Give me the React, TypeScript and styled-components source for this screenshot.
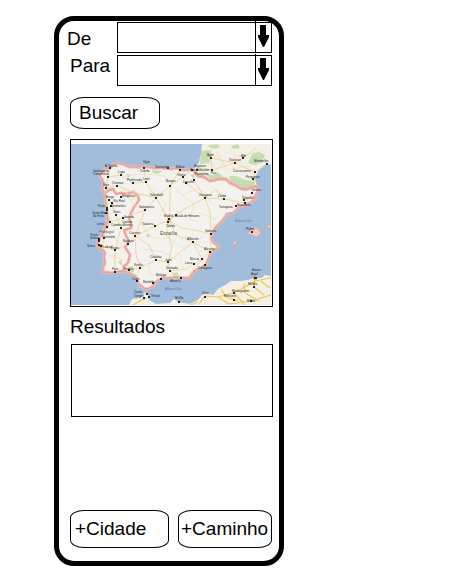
import React from "react";
import styled, { createGlobalStyle } from "styled-components";

const GlobalStyle = createGlobalStyle`
  *, *::before, *::after { box-sizing: border-box; }
  body {
    margin: 0;
    background: #fff;
    color: #000;
    font: 19px/22px "Liberation Sans", Arial, sans-serif;
  }
`;

const Page = styled.div`
  display: flex;
  min-height: 100vh;
  padding: 16px 16px 5px 54px;
`;

const Frame = styled.main`
  display: flex;
  flex-direction: column;
  width: 100%;
  max-width: 230px;
  padding: 1px 6px 13px 8px;
  border: 5px solid #000;
  border-radius: 20px;
`;

const Form = styled.form`
  display: flex;
  flex-direction: column;
  gap: 2px;
`;

const Field = styled.div`
  display: flex;
  height: 31px;
  padding-right: 1px;
`;

const FieldLabel = styled.label<{ $lowered?: boolean }>`
  flex: 0 0 50px;
  align-self: ${(p) => (p.$lowered ? "flex-end" : "flex-start")};
  padding: ${(p) => (p.$lowered ? "0 0 3px" : "0 0 0 3px")};
`;

const SelectBox = styled.div`
  position: relative;
  flex: 1;
`;

const Select = styled.select`
  display: block;
  width: 100%;
  height: 100%;
  padding: 0 20px 0 4px;
  border: 1px solid #000;
  border-radius: 0;
  background: #fff;
  color: inherit;
  font: inherit;
  appearance: none;
`;

const ArrowCell = styled.span`
  position: absolute;
  top: -1px;
  right: 0;
  bottom: 0;
  width: 17px;
  padding: 4px 0 0 2px;
  border-left: 1px solid #000;
  pointer-events: none;

  svg { display: block; }
`;

const Button = styled.button<{ $inset: number }>`
  height: 38px;
  padding: 0 0 0 ${(p) => p.$inset}px;
  border: 1px solid #000;
  border-radius: 14px / 8px;
  background: #fff;
  color: inherit;
  font: inherit;
  text-align: left;
  white-space: nowrap;
`;

const SearchButton = styled(Button)`
  align-self: flex-start;
  width: 90px;
  height: 32px;
  margin: 9px 0 0 3px;
`;

const MapPanel = styled.figure`
  margin: 10px 0 0 3px;
  padding: 4px 1px 1px 0;
  border: 1px solid #000;

  svg {
    display: block;
    width: 100%;
    height: auto;
  }
`;

const Heading = styled.h2`
  margin: 9px 0 6px 3px;
  font: inherit;
`;

const Results = styled.section`
  height: 73px;
  margin-left: 4px;
  border: 1px solid #000;
`;

const Actions = styled.div`
  display: grid;
  grid-template-columns: 99fr 94fr;
  gap: 9px;
  margin-top: auto;
  padding: 16px 1px 0 3px;
`;

const DownArrow = () => (
  <svg width="11" height="22" viewBox="0 0 11 22" aria-hidden="true">
    <path d="M2 0H8V10H11V12L6 22H5L0 12V10H2Z" fill="#000" />
  </svg>
);

type City = [name: string, x: number, y: number, lx?: number, ly?: number];

const cities: City[] = [
  ["A Coruña", 39, 24, 34, 23],
  ["Santiago de", 37, 33, 22, 28],
  ["Compostela", 37, 33, 22, 31],
  ["Lugo", 50, 31, 47, 29],
  ["Gijón", 73, 24, 72, 19],
  ["Oviedo", 73, 24, 69, 28],
  ["Santander", 97, 24, 84, 24],
  ["Ponferrada", 62, 39],
  ["León", 75, 38, 72, 36],
  ["Vigo", 35, 44, 32, 42],
  ["Ourense", 46, 42, 41, 40],
  ["Burgos", 99, 42, 95, 38],
  ["Braga", 38, 56, 35, 54],
  ["Bragança", 50, 53, 51, 53],
  ["Porto", 36, 64, 27, 63],
  ["Vila Real", 41, 59, 42, 58],
  ["Guimarães", 40, 62, 40, 63],
  ["Valladolid", 85, 54],
  ["Salamanca", 74, 66],
  ["Santa Maria", 36, 66, 21, 70],
  ["da Feira", 35, 69, 22, 73],
  ["Viseu", 45, 71, 42, 69],
  ["Guarda", 52, 74, 53, 74],
  ["Coimbra", 39, 78, 40, 82],
  ["Leiria", 36, 83, 26, 81],
  ["Castelo", 50, 84, 51, 79],
  ["Branco", 50, 84, 52, 82],
  ["Cáceres", 64, 92],
  ["Badajoz", 57, 100, 52, 98],
  ["Torres", 28, 95, 19, 92],
  ["Vedras", 28, 97, 19, 95],
  ["Santarém", 33, 94, 31, 94],
  ["Lisboa", 30, 102, 32, 104],
  ["Sintra", 28, 101, 16, 103],
  ["Évora", 44, 106, 40, 105],
  ["Madrid", 98, 75, 93, 73],
  ["Alcalá de Henares", 105, 71, 104, 73],
  ["Toledo", 97, 78, 95, 83],
  ["Talavera", 84, 82, 71, 81],
  ["Córdoba", 85, 116],
  ["Sevilla", 69, 124],
  ["Huelva", 58, 126, 53, 126],
  ["Faro", 44, 128, 41, 126],
  ["Jaén", 97, 118, 94, 117],
  ["Granada", 99, 127, 95, 125],
  ["Málaga", 90, 135, 85, 132],
  ["Marbella", 82, 139, 72, 139],
  ["Cádiz", 66, 137, 61, 136],
  ["Almería", 110, 134, 99, 138],
  ["Bilbao", 109, 26, 105, 24],
  ["San Sebastián", 121, 26, 119, 27],
  ["Vitoria", 112, 33, 106, 32],
  ["Pamplona", 123, 36, 124, 31],
  ["Logroño", 115, 39, 112, 39],
  ["Zaragoza", 134, 54],
  ["Lleida", 153, 55],
  ["Tarragona", 165, 62, 148, 64],
  ["Barcelona", 174, 59, 166, 62],
  ["Sabadell", 173, 56, 171, 55],
  ["Girona", 181, 49, 181, 47],
  ["Valencia", 140, 90, 134, 88],
  ["Albacete", 122, 98, 116, 96],
  ["Alicante", 139, 108, 133, 106],
  ["Murcia", 131, 115, 119, 116],
  ["Lorca", 123, 120, 114, 120],
  ["Cartagena", 134, 121, 127, 125],
  ["Palma", 181, 88, 175, 86],
  ["Bayonne", 126, 26, 123, 23],
  ["Pau", 141, 26, 140, 30],
  ["Toulouse", 164, 19, 158, 17],
  ["Montpellier", 196, 20, 183, 18],
  ["Carcassonne", 184, 28, 162, 28],
  ["Perpignan", 182, 35, 175, 34],
  ["Agen", 140, 14, 136, 12],
  ["Albi", 172, 14, 170, 13],
  ["Ceuta", 76, 150, 63, 149],
  ["Tánger", 73, 154, 63, 153],
  ["Tetuán", 78, 153, 80, 153],
  ["Melilla", 108, 158, 104, 155],
  ["Oran", 134, 153, 131, 150],
  ["Argel", 184, 134, 180, 131],
  ["Bouira", 185, 134, 181, 127],
  ["Mostaganem", 163, 149, 161, 148],
  ["Médéa", 183, 143, 177, 141],
  ["Relizane", 163, 156, 153, 153],
  ["M'Sila", 180, 157, 176, 158],
];

const spain =
  "M39 24 42 21 45 19 52 20 58 23 66 23 73 22 82 24 90 24 100 25 106 24 112 26 122 26 127 32 133 33 139 37 148 35 155 35 159 39 164 41 171 45 177 45 180 43 186 42 187 47 185 50 184 55 179 59 174 61 168 63 162 69 156 70 152 76 145 83 141 89 140 94 142 98 148 103 144 106 140 108 138 113 135 121 127 125 122 128 119 134 113 134 106 133 99 134 91 134 86 137 81 143 77 145 74 145 69 141 67 138 64 132 60 130 56 128 52 127 45 128 40 129 36 128 32 129 32 124 34 119 33 113 34 109 32 106 29 106 30 103 26 102 27 98 29 93 33 88 34 83 37 77 36 69 35 59 34 52 31 44 33 41 31 35 28 31 32 27 35 24Z";

const border =
  "M34 49 38 46 42 45 45 50 50 49 56 50 62 48 67 52 68 56 63 63 60 69 58 74 60 80 60 84 53 86 55 92 58 97 54 103 59 111 57 119 53 122 52 127";

const pyrenees =
  "M122 26 127 32 133 33 139 37 148 35 155 35 159 39 164 41 171 45 177 45 186 42";

const roads =
  "M98 76 85 54 75 38 73 24M85 54 99 42 112 33 121 26M98 76 99 58 99 42 109 26M98 76 115 64 134 54 153 55 174 59 181 49 183 36 184 28 196 20M98 76 110 84 124 86 140 90 139 108 131 115 117 133M98 76 96 86 101 103 97 118 85 116 69 124 64 136M97 118 99 127 90 135M98 76 84 82 64 92 57 100 44 106 30 102M36 64 39 78 33 94 30 102M36 64 35 44 37 33 39 24M37 33 50 31 62 39 75 38M74 66 85 54M74 66 64 92 65 110 69 124M74 66 52 74 39 78M112 33 115 39 134 54 139 68 140 90M122 98 105 91 98 76M122 98 139 108M122 98 131 115M97 118 122 98M35 44 46 42 64 49 85 54M123 36 134 54 145 45 153 55M39 56 45 71 50 84 44 106 44 128M99 127 110 134M64 92 78 101 85 116M141 26 164 19 184 28M126 24 141 26M140 0 140 14 141 26M140 14 164 19 172 14 185 4M52 126 69 124M99 127 115 125 131 115";

const minorRoads =
  "M45 35 52 43 60 58 74 66M56 31 74 30 94 32 99 42M82 43 95 60 89 73M70 79 81 94 98 94 113 105M105 46 123 60 119 75 127 79M73 105 92 108 107 116M111 51 128 44 141 60M144 46 163 58 161 66M128 69 146 76M37 111 53 116M39 91 51 101M55 60 71 50M79 118 78 128 90 135M109 110 112 124M145 7 156 26 179 22M158 4 166 13 193 6M170 51 182 56M113 93 132 94M126 14 145 22";

const france =
  "M131 0 130 9 128 19 122 26 127 32 139 37 155 35 164 41 177 45 186 42 184 35 187 27 195 20 200 21V0Z";

const africa =
  "M58 161 61 155 69 154 72 152 74 148 77 151 78 156 85 160 99 159 103 155 107 158 119 160 127 156 131 151 135 149 142 151 147 145 154 141 160 137 169 137 177 136 183 134 191 134 194 131 200 132V161Z";

const IberiaMap = () => (
  <svg viewBox="0 0 200 161" role="img" aria-label="Mapa da Península Ibérica">
    <rect width="200" height="161" fill="#a2bddc" />
    <path d={france} fill="#f2f0e8" />
    <path d={africa} fill="#f4f1e4" />
    <path d={spain} fill="#f3f2ee" />
    <g fill="#c5ddb0">
      <path d="M130 7 138 6 141 10 138 19 129 20Z" />
      <path d="M133 28 140 31 148 29 153 34 148 36 140 36Z" />
      <path d="M158 32 165 32 174 36 184 37 183 44 175 45 167 41 160 38Z" />
      <path d="M181 10 188 8 194 11 191 18 184 21 177 19Z" />
      <path d="M136 2 145 0 150 3 144 5ZM160 2 167 0 169 4 162 5Z" />
      <path d="M65 22 70 21 72 24 67 25ZM81 26 91 27 87 30 82 29Z" />
      <path d="M55 31 59 30 58 34ZM47 118 51 116 51 122ZM57 123 62 122 63 128 59 129Z" />
      <path d="M101 130 106 128 108 130 103 132ZM119 31 124 30 123 35ZM75 90 79 91 77 94Z" />
    </g>
    <g fill="none" strokeLinejoin="round">
      <g stroke="#f4b6b0" strokeWidth="3">
        <path d={spain} />
        <path d={border} />
        <path d={pyrenees} />
      </g>
      <g stroke="#b98f8c" strokeWidth="0.5">
        <path d={spain} />
        <path d={border} />
      </g>
      <path d={minorRoads} stroke="#eee0b0" strokeWidth="0.7" />
      <path d={roads} stroke="#efcf8c" strokeWidth="0.8" />
      <path
        d="M62 161 71 156 76 154M128 160 134 152 147 153 163 149 184 137 200 134M147 153 158 160 180 157 200 151M163 149 174 161M184 135 183 143 193 151M150 145 155 153 167 157M173 139 174 149 188 157M190 137 197 143 200 143M119 161 127 158"
        stroke="#efc45f"
        strokeWidth="1.2"
      />
    </g>
    <g fill="#f4cbc2" stroke="#dc9d96" strokeWidth="0.7">
      <path d="M176 89 184 83 187 85 190 89 186 93 180 91Z" />
      <path d="M161 100 165 96 166 98 163 101Z" />
      <path d="M195 81 199 81 201 84 197 84Z" />
      <path d="M164 103 166 103 165 104Z" />
    </g>
    <circle cx="98" cy="76" r="2" fill="#ecae3a" />
    <circle cx="30" cy="102" r="2" fill="#ecae3a" />
    <circle cx="184" cy="134" r="2" fill="#ecae3a" />
    <g fontFamily="Liberation Sans, Arial, sans-serif" fontSize="3" fill="#222">
      {cities.map(([name, x, y, lx = x - 6, ly = y - 2]) => (
        <React.Fragment key={name}>
          <rect x={x - 1} y={y - 1} width="2" height="2" />
          <text x={lx} y={ly}>{name}</text>
        </React.Fragment>
      ))}
    </g>
    <g fontFamily="Liberation Sans, Arial, sans-serif" fill="#555">
      <text x="28" y="89" fontSize="4">Portugal</text>
      <text x="89" y="91" fontSize="5">España</text>
      <g fontSize="3" fontStyle="italic" fill="#5279a6">
        <text x="164" y="78">Balearic Sea</text>
        <text x="94" y="146">Alboran Sea</text>
      </g>
    </g>
  </svg>
);

const CitySelect = ({ id, label, lowered }: { id: string; label: string; lowered?: boolean }) => (
  <Field>
    <FieldLabel htmlFor={id} $lowered={lowered}>{label}</FieldLabel>
    <SelectBox>
      <Select id={id} name={id} defaultValue="">
        <option value="" />
      </Select>
      <ArrowCell><DownArrow /></ArrowCell>
    </SelectBox>
  </Field>
);

export default function App() {
  return (
    <>
      <GlobalStyle />
      <Page>
        <Frame>
          <Form onSubmit={(e) => e.preventDefault()}>
            <CitySelect id="de" label="De" lowered />
            <CitySelect id="para" label="Para" />
            <SearchButton type="submit" $inset={8}>Buscar</SearchButton>
          </Form>
          <MapPanel><IberiaMap /></MapPanel>
          <Heading id="resultados">Resultados</Heading>
          <Results aria-labelledby="resultados" />
          <Actions>
            <Button type="button" $inset={4}>+Cidade</Button>
            <Button type="button" $inset={2}>+Caminho</Button>
          </Actions>
        </Frame>
      </Page>
    </>
  );
}
